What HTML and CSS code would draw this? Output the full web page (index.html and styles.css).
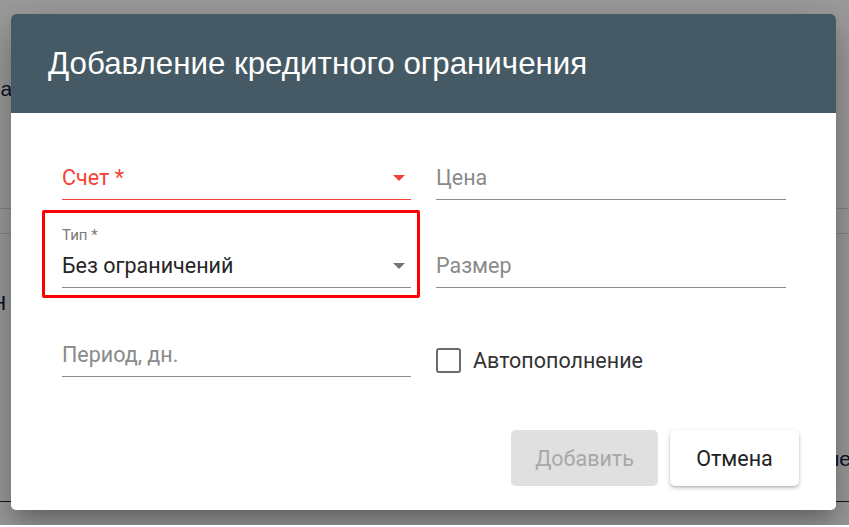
FILE: index.html
```html
<!DOCTYPE html>
<html lang="ru">
<head>
<meta charset="utf-8">
<title>Добавление кредитного ограничения</title>
<link rel="stylesheet" href="styles.css">
</head>
<body>
<div class="screen">
  <div class="page">
    <div class="bg-word">на</div>
    <div class="bg-rule bg-rule-1"></div>
    <div class="bg-rule bg-rule-2"></div>
    <div class="bg-letter">Н</div>
    <div class="bg-end"><span class="bg-end-text">не</span></div>
    <div class="bg-rule bg-rule-dark"></div>
  </div>
  <div class="overlay">
    <div class="dialog">
      <div class="dialog-header">
        <h1 class="dialog-title">Добавление кредитного ограничения</h1>
      </div>
      <div class="dialog-body">
        <div class="field field-error">
          <span class="field-text">Счет *</span>
          <span class="arrow arrow-red"></span>
        </div>
        <div class="field">
          <span class="field-text placeholder">Цена</span>
        </div>
        <div class="field field-labeled highlight">
          <div class="field-stack">
            <span class="field-label">Тип *</span>
            <span class="field-text value">Без ограничений</span>
          </div>
          <span class="arrow arrow-gray"></span>
        </div>
        <div class="field">
          <span class="field-text placeholder">Размер</span>
        </div>
        <div class="field field-last">
          <span class="field-text placeholder">Период, дн.</span>
        </div>
        <label class="check">
          <span class="check-box"></span>
          <span class="check-label">Автопополнение</span>
        </label>
      </div>
      <div class="dialog-footer">
        <button class="btn btn-disabled" disabled>Добавить</button>
        <button class="btn btn-cancel">Отмена</button>
      </div>
    </div>
  </div>
</div>
</body>
</html>
```
FILE: styles.css
```css
html, body {
  margin: 0;
  padding: 0;
  background: #ffffff;
}

.screen {
  position: relative;
  width: 849px;
  height: 525px;
  overflow: hidden;
  font-family: "Liberation Sans", Arial, sans-serif;
}

/* page behind the modal */
.page {
  height: 100%;
  background: #ffffff;
  display: flex;
  flex-direction: column;
}

.bg-word {
  margin-top: 78px;
  margin-left: -11px;
  font-size: 21px;
  line-height: 22px;
  color: #0d2140;
}

.bg-rule {
  height: 1px;
  background: #d9d9d9;
}

.bg-rule-1 { margin-top: 108px; }
.bg-rule-2 { margin-top: 24px; }

.bg-letter {
  margin-top: 58px;
  margin-left: -9px;
  font-size: 21px;
  line-height: 22px;
  color: #0d2140;
}

.bg-end {
  margin-top: 134px;
  display: flex;
  justify-content: flex-end;
  font-size: 21px;
  line-height: 22px;
  color: #0d2140;
}

.bg-end-text {
  margin-right: -2px;
}

.bg-rule-dark {
  margin-top: 31px;
  background: #222222;
}

.overlay {
  position: absolute;
  inset: 0;
  background: rgba(0, 0, 0, 0.39);
  padding: 14px 13px 15px 11px;
  box-sizing: border-box;
}

.dialog {
  width: 825px;
  height: 496px;
  background: #ffffff;
  border-radius: 5px;
  overflow: hidden;
  box-shadow: 0 11px 15px -7px rgba(0,0,0,0.2), 0 24px 38px 3px rgba(0,0,0,0.14), 0 9px 46px 8px rgba(0,0,0,0.12);
  display: flex;
  flex-direction: column;
}

.dialog-header {
  height: 99px;
  background: #455a64;
  display: flex;
  align-items: center;
  padding-left: 37px;
  flex: none;
}

.dialog-title {
  margin: 0;
  font-family: "Liberation Sans", Arial, sans-serif;
  font-weight: normal;
  font-size: 31.3px;
  line-height: 38px;
  color: #ffffff;
}

.dialog-body {
  display: grid;
  grid-template-columns: 349px 350px;
  grid-template-rows: 87px 88px 89px;
  column-gap: 25px;
  padding: 0 50px 0 51px;
  flex: none;
}

.field {
  align-self: end;
  display: flex;
  align-items: flex-end;
  padding-bottom: 8px;
  border-bottom: 1px solid #8c8c8c;
  position: relative;
}

.field-text {
  font-family: Roboto, "Liberation Sans", Arial, sans-serif;
  font-size: 21.5px;
  line-height: 26px;
  flex: 1;
}

.placeholder {
  color: #8a8a8a;
}

.value {
  color: #262626;
}

.field-error {
  border-bottom-color: #f44336;
}

.field-error .field-text {
  color: #f44336;
}

.field-stack {
  flex: 1;
  display: flex;
  flex-direction: column;
  gap: 9px;
}

.field-label {
  font-family: Roboto, "Liberation Sans", Arial, sans-serif;
  font-size: 15px;
  line-height: 18px;
  color: #7a7a7a;
}

.arrow {
  width: 0;
  height: 0;
  border-left: 6.5px solid transparent;
  border-right: 6.5px solid transparent;
  border-top: 6px solid #757575;
  margin: 0 6px 10px 0;
}

.arrow-red {
  border-top-color: #f44336;
}

.highlight::after {
  content: "";
  position: absolute;
  left: -20px;
  right: -9px;
  top: -16px;
  bottom: -11px;
  border: 3px solid #ff0000;
  border-radius: 2px;
}

.check {
  align-self: end;
  margin-bottom: 3px;
  display: flex;
  align-items: center;
  gap: 12px;
}

.check-box {
  width: 25px;
  height: 25px;
  box-sizing: border-box;
  border: 2px solid #6b6b6b;
  border-radius: 3px;
}

.check-label {
  font-family: Roboto, "Liberation Sans", Arial, sans-serif;
  font-size: 21.5px;
  line-height: 26px;
  color: #333333;
  padding-top: 2px;
}

.dialog-footer {
  margin-top: 53px;
  display: flex;
  justify-content: flex-end;
  gap: 12px;
  padding-right: 37px;
}

.btn {
  height: 56px;
  border: none;
  border-radius: 5px;
  font-family: Roboto, "Liberation Sans", Arial, sans-serif;
  font-size: 21.5px;
  padding: 0;
}

.btn-disabled {
  width: 147px;
  background: #e0e0e0;
  color: #a8a8a8;
}

.btn-cancel {
  width: 129px;
  background: #ffffff;
  color: #222222;
  box-shadow: 0 2px 4px rgba(0,0,0,0.22), 0 1px 2px rgba(0,0,0,0.12);
}
```
